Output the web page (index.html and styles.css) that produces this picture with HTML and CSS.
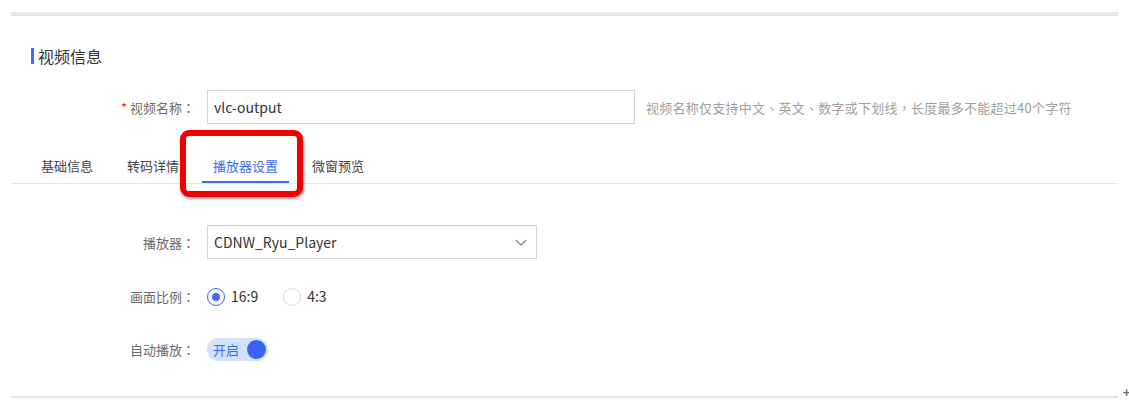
FILE: index.html
```html
<!DOCTYPE html>
<html lang="zh-CN">
<head>
<meta charset="utf-8">
<title>视频信息</title>
<link rel="stylesheet" href="styles.css">
</head>
<body>
<div class="page">
  <div class="top-rule"></div>
  <h2 class="section-title">视频信息</h2>
  <div class="form-row name-row">
    <label class="form-label"><span class="req">*</span> 视频名称<span class="punct" lang="zh-TW">：</span></label>
    <div class="text-input">vlc-output</div>
    <span class="hint">视频名称仅支持中文<span class="punct" lang="zh-TW">、</span>英文<span class="punct" lang="zh-TW">、</span>数字或下划线<span class="punct" lang="zh-TW">，</span>长度最多不能超过40个字符</span>
  </div>
  <div class="tabs">
    <div class="tab">基础信息</div>
    <div class="tab">转码详情</div>
    <div class="tab active">播放器设置<span class="callout"></span></div>
    <div class="tab">微窗预览</div>
  </div>
  <div class="tab-panel">
    <div class="form-row player-row">
      <label class="form-label">播放器<span class="punct" lang="zh-TW">：</span></label>
      <div class="select">
        <span class="select-value">CDNW_Ryu_Player</span>
        <svg class="chevron" width="12" height="7" viewBox="0 0 12 7"><path d="M1 1 L6 6 L11 1" fill="none" stroke="#7a8391" stroke-width="1.2"/></svg>
      </div>
    </div>
    <div class="form-row ratio-row">
      <label class="form-label">画面比例<span class="punct" lang="zh-TW">：</span></label>
      <div class="radio-group">
        <span class="radio checked"><span class="radio-dot"></span></span>
        <span class="radio-text">16:9</span>
        <span class="radio"></span>
        <span class="radio-text">4:3</span>
      </div>
    </div>
    <div class="form-row auto-row">
      <label class="form-label">自动播放<span class="punct" lang="zh-TW">：</span></label>
      <div class="switch"><span class="switch-text">开启</span><span class="switch-knob"></span></div>
    </div>
  </div>
  <div class="bottom-rule"></div>
</div>
<span class="corner-mark">+</span>
</body>
</html>
```

FILE: styles.css
```css
html, body {
  margin: 0;
  padding: 0;
  background: #ffffff;
}
body {
  font-family: "Noto Sans CJK SC", "Noto Sans", sans-serif;
  color: #333333;
  width: 1129px;
  height: 407px;
  overflow: hidden;
  position: relative;
}
.page {
  padding: 0 11px;
}
.punct {
  font-family: "Noto Sans CJK TC", "Noto Sans CJK SC", sans-serif;
}
.top-rule {
  margin-top: 12px;
  height: 4px;
  background: #e6eaef;
  border-bottom: 1px solid #dde2e8;
  box-sizing: border-box;
}
.section-title {
  margin: 29px 0 0 0;
  padding-left: 20px;
  font-size: 16px;
  line-height: 22px;
  font-weight: normal;
  color: #333333;
  display: flex;
  align-items: center;
}
.section-title::before {
  content: "";
  width: 3px;
  height: 16px;
  background: #3d6cf5;
  margin-right: 4px;
}
.form-row {
  display: flex;
  align-items: center;
  height: 34px;
}
.form-label {
  width: 184px;
  flex: none;
  text-align: right;
  font-size: 13px;
  color: #6b6b6b;
  margin-right: 12px;
}
.req {
  color: #f5222d;
}
.name-row {
  margin-top: 23px;
}
.text-input {
  width: 428px;
  height: 34px;
  box-sizing: border-box;
  border: 1px solid #cdd6e1;
  padding: 0 6px;
  font-size: 14px;
  line-height: 32px;
  color: #333333;
}
.hint {
  margin-left: 11px;
  font-size: 13px;
  letter-spacing: 0.25px;
  color: #a0a0a0;
}
.tabs {
  margin-top: 26px;
  display: flex;
  gap: 12px;
  padding-left: 19px;
  border-bottom: 1px solid #e3e7ec;
}
.tab {
  position: relative;
  padding: 6px 11px 5px;
  font-size: 13px;
  line-height: 20px;
  color: #444444;
  border-bottom: 2px solid transparent;
}
.tab.active {
  color: #3d6cf5;
  border-bottom-color: #3d6cf5;
}
.callout {
  position: absolute;
  left: -22px;
  top: -20px;
  width: 123px;
  height: 67px;
  box-sizing: border-box;
  border: 6px solid #f00000;
  border-radius: 9px;
  box-shadow: 1px 2px 3px rgba(0, 0, 0, 0.35);
}
.player-row {
  margin-top: 41px;
}
.select {
  width: 330px;
  height: 34px;
  box-sizing: border-box;
  border: 1px solid #cdd6e1;
  display: flex;
  align-items: center;
  justify-content: space-between;
  padding: 0 9px 0 6px;
}
.select-value {
  font-size: 14px;
  color: #333333;
}
.ratio-row {
  margin-top: 20px;
}
.radio-group {
  display: flex;
  align-items: center;
}
.radio {
  width: 18px;
  height: 18px;
  box-sizing: border-box;
  border: 1px solid #d6d9de;
  border-radius: 50%;
  display: flex;
  align-items: center;
  justify-content: center;
  margin-top: 2px;
}
.radio.checked {
  border-color: #3d6cf5;
}
.radio-dot {
  width: 8px;
  height: 8px;
  border-radius: 50%;
  background: #3d6cf5;
}
.radio-text {
  font-size: 14px;
  color: #333333;
  margin-left: 6px;
  margin-right: 25px;
}
.auto-row {
  margin-top: 19px;
}
.switch {
  width: 61px;
  height: 23px;
  border-radius: 12px;
  background: #d2e2fd;
  display: flex;
  align-items: center;
  justify-content: space-between;
  padding: 0 2px 0 6px;
  box-sizing: border-box;
}
.switch-text {
  font-size: 13px;
  color: #3d6cf5;
}
.switch-knob {
  width: 19px;
  height: 19px;
  border-radius: 50%;
  background: #3a63f5;
}
.bottom-rule {
  margin-top: 30px;
  height: 2px;
  background: #dfe3e9;
}
.corner-mark {
  position: absolute;
  left: 1122px;
  top: 386px;
  font-size: 11px;
  font-weight: bold;
  color: #666666;
  font-family: "DejaVu Sans", sans-serif;
}
```
